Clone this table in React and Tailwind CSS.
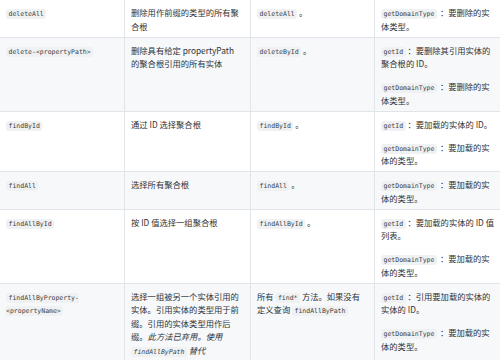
import React from 'react';

const C = ({ children, gap }) => (
  <code
    className={`bg-[#eff1f3] rounded-[3px] px-[2.5px] py-[1px] leading-none text-[6.5px] text-[#3a3f45] font-['DejaVu_Sans_Mono','Liberation_Mono',monospace] ${
      gap ? 'mr-[3px]' : ''
    }`}
  >
    {children}
  </code>
);

const rows = [
  {
    name: <C>deleteAll</C>,
    desc: '删除用作前缀的类型的所有聚合根',
    expr: <><C>deleteAll</C> 。</>,
    params: [<><C gap>getDomainType</C>：要删除的实体类型。</>],
  },
  {
    name: <C>delete-&lt;propertyPath&gt;</C>,
    desc: '删除具有给定 propertyPath 的聚合根引用的所有实体',
    expr: <><C>deleteById</C> 。</>,
    params: [
      <><C>getId</C> ：要删除其引用实体的聚合根的 ID。</>,
      <><C gap>getDomainType</C>：要删除的实体类型。</>,
    ],
  },
  {
    name: <C>findById</C>,
    desc: '通过 ID 选择聚合根',
    expr: <><C>findById</C> 。</>,
    params: [
      <><C>getId</C> ：要加载的实体的 ID。</>,
      <><C gap>getDomainType</C>：要加载的实体的类型。</>,
    ],
  },
  {
    name: <C>findAll</C>,
    desc: '选择所有聚合根',
    expr: <><C>findAll</C> 。</>,
    params: [<><C gap>getDomainType</C>：要加载的实体的类型。</>],
  },
  {
    name: <C>findAllById</C>,
    desc: '按 ID 值选择一组聚合根',
    expr: <><C>findAllById</C> 。</>,
    params: [
      <><C>getId</C> ：要加载的实体的 ID 值列表。</>,
      <><C gap>getDomainType</C>：要加载的实体的类型。</>,
    ],
  },
  {
    name: <C>findAllByProperty-&lt;propertyName&gt;</C>,
    desc: (
      <>
        选择一组被另一个实体引用的实体。引用实体的类型用于前缀。引用的实体类型用作后缀。
        <em>此方法已弃用。使用 <C>findAllByPath</C> 替代</em>
      </>
    ),
    expr: <>所有 <C>find*</C> 方法。如果没有定义查询 <C>findAllByPath</C></>,
    params: [
      <><C>getId</C> ：引用要加载的实体的实体的 ID。</>,
      <><C gap>getDomainType</C>：要加载的实体的类型。</>,
    ],
  },
];

const cell = 'align-top border border-[#e1e4e8] px-[6px] pt-[6px] pb-[3.5px]';

export default function App() {
  return (
    <div className="w-[500px] h-[360px] overflow-hidden bg-white font-['Noto_Sans_CJK_SC',sans-serif] text-[8.3px] leading-[13.5px] text-[#2f3337]">
      <table className="w-[502px] -ml-px -mt-px table-fixed border-collapse">
        <colgroup>
          <col className="w-[125px]" />
          <col className="w-[126px]" />
          <col className="w-[124px]" />
          <col className="w-[127px]" />
        </colgroup>
        <tbody>
          {rows.map((r, i) => (
            <tr key={i} className={i % 2 ? 'bg-[#f6f8fa]' : 'bg-white'}>
              <td className={cell}>{r.name}</td>
              <td className={cell}>{r.desc}</td>
              <td className={cell}>{r.expr}</td>
              <td className={cell}>
                <div className="flex flex-col gap-[9.5px]">
                  {r.params.map((p, j) => (
                    <p key={j}>{p}</p>
                  ))}
                </div>
              </td>
            </tr>
          ))}
        </tbody>
      </table>
    </div>
  );
}
